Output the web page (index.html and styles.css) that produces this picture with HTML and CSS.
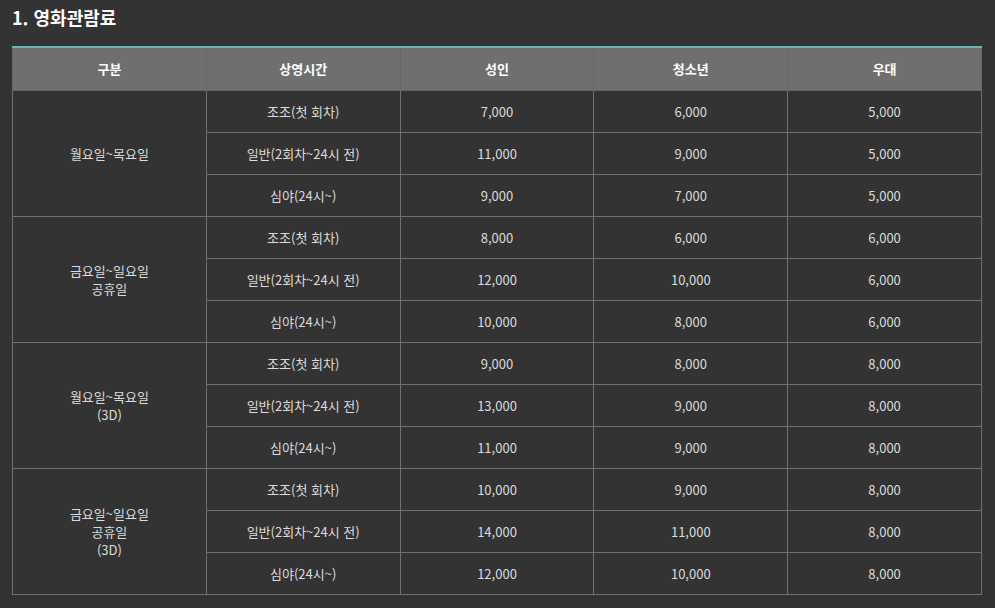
FILE: index.html
```html
<!DOCTYPE html>
<html lang="ko">
<head>
    <meta charset="UTF-8">
    <title>영화관람료</title>
    <link rel="stylesheet" href="styles.css">
</head>
<body>

    <!-- 관람료 섹션 -->
    <section class="price">
        <h2 class="price-title">1. 영화관람료</h2>
        <table class="price-table">
            <thead>
                <tr>
                    <th>구분</th>
                    <th>상영시간</th>
                    <th>성인</th>
                    <th>청소년</th>
                    <th>우대</th>
                </tr>
            </thead>
            <tbody>
                <tr>
                    <td rowspan="3">월요일~목요일</td>
                    <td>조조(첫 회차)</td><td>7,000</td><td>6,000</td><td>5,000</td>
                </tr>
                <tr><td>일반(2회차~24시 전)</td><td>11,000</td><td>9,000</td><td>5,000</td></tr>
                <tr><td>심야(24시~)</td><td>9,000</td><td>7,000</td><td>5,000</td></tr>

                <tr>
                    <td rowspan="3">금요일~일요일<br>공휴일</td>
                    <td>조조(첫 회차)</td><td>8,000</td><td>6,000</td><td>6,000</td>
                </tr>
                <tr><td>일반(2회차~24시 전)</td><td>12,000</td><td>10,000</td><td>6,000</td></tr>
                <tr><td>심야(24시~)</td><td>10,000</td><td>8,000</td><td>6,000</td></tr>

                <tr>
                    <td rowspan="3">월요일~목요일<br>(3D)</td>
                    <td>조조(첫 회차)</td><td>9,000</td><td>8,000</td><td>8,000</td>
                </tr>
                <tr><td>일반(2회차~24시 전)</td><td>13,000</td><td>9,000</td><td>8,000</td></tr>
                <tr><td>심야(24시~)</td><td>11,000</td><td>9,000</td><td>8,000</td></tr>

                <tr>
                    <td rowspan="3">금요일~일요일<br>공휴일<br>(3D)</td>
                    <td>조조(첫 회차)</td><td>10,000</td><td>9,000</td><td>8,000</td>
                </tr>
                <tr><td>일반(2회차~24시 전)</td><td>14,000</td><td>11,000</td><td>8,000</td></tr>
                <tr><td>심야(24시~)</td><td>12,000</td><td>10,000</td><td>8,000</td></tr>
            </tbody>
        </table>
    </section>

</body>
</html>
```

FILE: styles.css
```css
/* 기본 */
body {
    margin: 0;
    padding: 0 12px;
    background-color: #333333;
    color: #dddddd;
    font-family: "Noto Sans CJK KR", "Noto Sans", sans-serif;
}

/* 제목 */
.price-title {
    margin: 0;
    padding-top: 4px;
    height: 42px;
    font-size: 18px;
    line-height: 26px;
    font-weight: bold;
    color: #ffffff;
}

/* 표 */
.price-table {
    width: 970px;
    border-collapse: collapse;
    table-layout: fixed;
    border-top: 2px solid #6ab5b9;
    font-size: 13px;
}

.price-table th,
.price-table td {
    height: 41px;
    padding: 0;
    text-align: center;
    vertical-align: middle;
    border: 1px solid #707070;
    line-height: 18px;
}

.price-table th {
    height: 42px;
    background-color: #6f6f6f;
    color: #ffffff;
    font-weight: bold;
    border-top: none;
    border-color: #666666;
}

.price-table td {
    color: #dcdcdc;
}
```
